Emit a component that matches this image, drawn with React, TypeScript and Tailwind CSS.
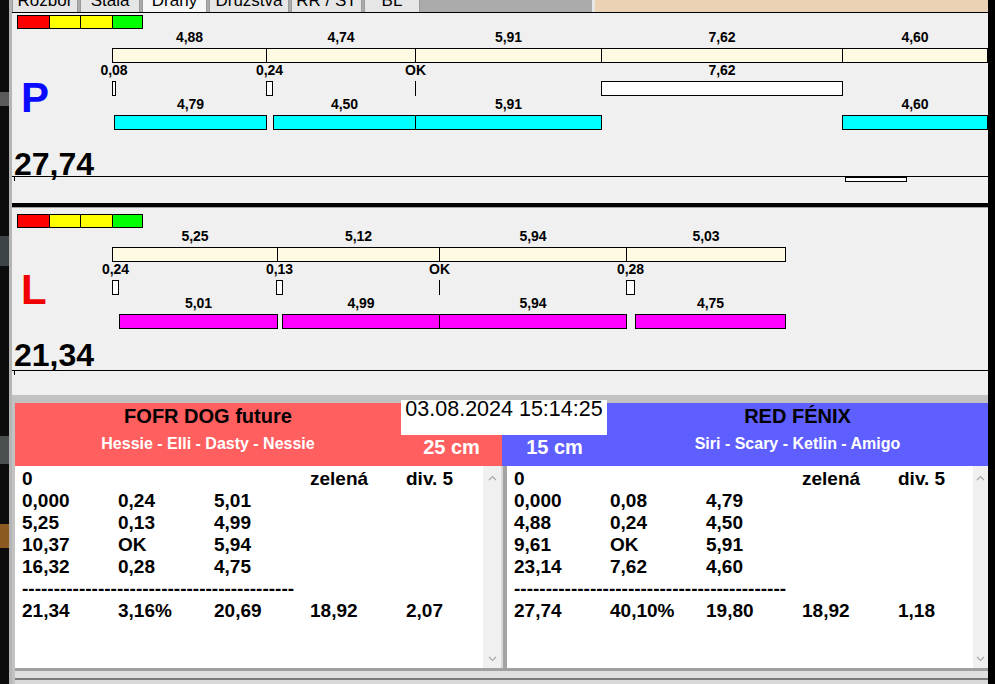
import React from 'react';

// x1, x2 are screen x positions of a segment, label shown centred above it
type Seg = [number, number, string];

interface LaneData {
  letter: string;
  letterCls: string;
  total: string;
  totalCls: string;
  indicatorCls: string;
  lineCls: string;
  heightCls: string;
  shift: number;
  row1: Seg[];
  row2: Seg[];
  row3: Seg[];
  row3Cls: string;
  footBox: boolean;
}

const ORIGIN_X = 12;

const lanes: LaneData[] = [
  {
    letter: 'P',
    letterCls: 'mt-[48px] ml-[9px] text-[#0a0aff]',
    total: '27,74',
    totalCls: 'mt-[33px]',
    indicatorCls: 'mt-[2px]',
    lineCls: '',
    heightCls: 'h-[190px]',
    shift: 0,
    row1: [
      [112, 266, '4,88'],
      [266, 415, '4,74'],
      [415, 601, '5,91'],
      [601, 842, '7,62'],
      [842, 987, '4,60'],
    ],
    row2: [
      [112, 115, '0,08'],
      [266, 272, '0,24'],
      [415, 415, 'OK'],
      [601, 842, '7,62'],
    ],
    row3: [
      [114, 266, '4,79'],
      [273, 415, '4,50'],
      [415, 601, '5,91'],
      [842, 987, '4,60'],
    ],
    row3Cls: 'bg-[#00ffff]',
    footBox: true,
  },
  {
    letter: 'L',
    letterCls: 'mt-[41px] ml-[9px] text-[#f00000]',
    total: '21,34',
    totalCls: 'mt-[32px]',
    indicatorCls: 'mt-[6px]',
    lineCls: 'mt-[3px]',
    heightCls: 'h-[187px]',
    shift: 4,
    row1: [
      [112, 277, '5,25'],
      [277, 439, '5,12'],
      [439, 626, '5,94'],
      [626, 785, '5,03'],
    ],
    row2: [
      [112, 118, '0,24'],
      [276, 282, '0,13'],
      [439, 439, 'OK'],
      [626, 634, '0,28'],
    ],
    row3: [
      [119, 277, '5,01'],
      [282, 439, '4,99'],
      [439, 626, '5,94'],
      [635, 785, '4,75'],
    ],
    row3Cls: 'bg-[#ff00ff]',
    footBox: false,
  },
];

const tabs = [
  { label: 'Rozbor', w: 'w-[66px]', active: false },
  { label: 'Stála', w: 'w-[60px]', active: false },
  { label: 'Dráhy', w: 'w-[65px]', active: true },
  { label: 'Družstva', w: 'w-[80px]', active: false },
  { label: 'RR / ST', w: 'w-[71px]', active: false },
  { label: 'BL', w: 'w-[56px]', active: false },
];

const DASHES = '-'.repeat(43);

const leftRows = [
  ['0', '', '', 'zelená', 'div. 5'],
  ['0,000', '0,24', '5,01', '', ''],
  ['5,25', '0,13', '4,99', '', ''],
  ['10,37', 'OK', '5,94', '', ''],
  ['16,32', '0,28', '4,75', '', ''],
];
const leftTotal = ['21,34', '3,16%', '20,69', '18,92', '2,07'];

const rightRows = [
  ['0', '', '', 'zelená', 'div. 5'],
  ['0,000', '0,08', '4,79', '', ''],
  ['4,88', '0,24', '4,50', '', ''],
  ['9,61', 'OK', '5,91', '', ''],
  ['23,14', '7,62', '4,60', '', ''],
];
const rightTotal = ['27,74', '40,10%', '19,80', '18,92', '1,18'];

function Label({ seg, top }: { seg: Seg; top: number }) {
  const center = (seg[0] + seg[1]) / 2 - ORIGIN_X + 0.5;
  return (
    <span
      className="absolute -ml-[40px] w-[80px] text-center text-[14px] font-bold leading-[14px] text-black"
      style={{ left: center, top }}
    >
      {seg[2]}
    </span>
  );
}

function Bar({ seg, top, color }: { seg: Seg; top: number; color: string }) {
  if (seg[1] === seg[0]) {
    return (
      <div
        className="absolute h-[15px] w-px bg-black"
        style={{ left: seg[0] - ORIGIN_X, top }}
      />
    );
  }
  return (
    <div
      className={`absolute box-border h-[15px] border border-black ${color}`}
      style={{ left: seg[0] - ORIGIN_X, top, width: seg[1] - seg[0] + 1 }}
    />
  );
}

function Indicator({ cls }: { cls: string }) {
  return (
    <div className={`ml-[5px] flex h-[14px] w-[126px] border border-black ${cls}`}>
      <div className="w-[32px] border-r border-black bg-[#ff0000]" />
      <div className="w-[31px] border-r border-black bg-[#ffff00]" />
      <div className="w-[32px] border-r border-black bg-[#ffff00]" />
      <div className="flex-1 bg-[#00ff00]" />
    </div>
  );
}

function Lane({ d }: { d: LaneData }) {
  const s = d.shift;
  return (
    <div className={`relative flex flex-col bg-[#f0f0f0] ${d.heightCls}`}>
      <Indicator cls={d.indicatorCls} />
      <div className={`text-[42px] font-bold leading-[42px] ${d.letterCls}`}>{d.letter}</div>
      <div className={`ml-[2px] text-[32px] font-bold leading-[24px] text-black ${d.totalCls}`}>
        {d.total}
      </div>
      <div className={`flex border-t border-black ${d.lineCls}`}>
        <div className="ml-[2px] h-[4px] w-px bg-black" />
        {d.footBox && (
          <div className="ml-[830px] box-border h-[5px] w-[62px] border border-black bg-white" />
        )}
      </div>

      {/* chart layer */}
      <div className="pointer-events-none absolute inset-0">
        {d.row1.map((seg, i) => (
          <React.Fragment key={`a${i}`}>
            <Label seg={seg} top={17 + s} />
            <Bar seg={seg} top={35 + s} color="bg-[#fffbe3]" />
          </React.Fragment>
        ))}
        {d.row2.map((seg, i) => (
          <React.Fragment key={`b${i}`}>
            <Label seg={seg} top={50 + s} />
            <Bar seg={seg} top={68 + s} color="bg-white" />
          </React.Fragment>
        ))}
        {d.row3.map((seg, i) => (
          <React.Fragment key={`c${i}`}>
            <Label seg={seg} top={84 + s} />
            <Bar seg={seg} top={102 + s} color={d.row3Cls} />
          </React.Fragment>
        ))}
      </div>
    </div>
  );
}

function Chevron({ up }: { up: boolean }) {
  return (
    <svg width="9" height="6" viewBox="0 0 9 6" className="text-[#a8a8a8]">
      <path
        d={up ? 'M1 5 L4.5 1.5 L8 5' : 'M1 1 L4.5 4.5 L8 1'}
        fill="none"
        stroke="currentColor"
        strokeWidth="1.2"
      />
    </svg>
  );
}

function Row({ r }: { r: string[] }) {
  return (
    <div className="grid grid-cols-[96px_96px_96px_96px_1fr]">
      {r.map((c, i) => (
        <span key={i} className="whitespace-nowrap">{c}</span>
      ))}
    </div>
  );
}

function ResultList({ rows, total, widthCls, barCls }: {
  rows: string[][];
  total: string[];
  widthCls: string;
  barCls: string;
}) {
  return (
    <div className={`flex min-w-0 ${widthCls}`}>
      <div className="min-w-0 flex-1 overflow-hidden bg-white pl-[7px] pt-[2px] text-[19px] font-bold leading-[22px] text-black">
        {rows.map((r, i) => (
          <Row key={i} r={r} />
        ))}
        <div className="whitespace-nowrap">{DASHES}</div>
        <Row r={total} />
      </div>
      <div className={`flex shrink-0 flex-col items-center justify-between bg-[#f0f0f0] pt-[9px] pb-[6px] ${barCls}`}>
        <Chevron up />
        <Chevron up={false} />
      </div>
    </div>
  );
}

export default function App() {
  return (
    <div className="flex h-[684px] w-[995px] overflow-hidden bg-black font-['Liberation_Sans',Arial,sans-serif]">
      {/* desktop strip on the left */}
      <div className="flex w-[12px] shrink-0">
        <div className="flex w-[9px] flex-col bg-[#0c0c0c]">
          <div className="mt-[92px] h-[14px] bg-[#5a5a5a]" />
          <div className="mt-[130px] h-[30px] bg-[#3c4448]" />
          <div className="mt-[170px] h-[28px] bg-[#4a5050]" />
          <div className="mt-[60px] h-[24px] bg-[#8a5a20]" />
        </div>
        <div className="w-[3px] bg-[#b4b4b4]" />
      </div>

      <div className="flex w-[976px] min-w-0 shrink-0 flex-col">
        {/* tab strip, cut at the top */}
        <div className="flex h-[12px] overflow-hidden bg-[#ababab]">
          {tabs.map((t) => (
            <div
              key={t.label}
              className={`${t.w} mr-[2px] shrink-0 border-x border-[#9a9a9a] text-center text-[17px] leading-[17px] text-black ${
                t.active ? 'bg-[#f7f7f7]' : 'bg-[#e6e6e6]'
              }`}
            >
              <div className="-mt-[8px]">{t.label}</div>
            </div>
          ))}
          <div className="w-[170px] shrink-0" />
          <div className="w-[3px] shrink-0 bg-[#e6e6e6]" />
          <div className="flex-1 bg-[#ecd2b4]" />
        </div>

        <div className="h-px bg-black" />
        <Lane d={lanes[0]} />
        <div className="h-[4px] bg-black" />
        <div className="h-px bg-[#a0a0a0]" />
        <Lane d={lanes[1]} />

        {/* team area */}
        <div className="relative flex flex-1 flex-col bg-[#c2c2c2] pl-[3px] pt-[8px]">
          <div className="flex h-[63px]">
            <div className="flex w-[487px] bg-[#ff5f5f]">
              <div className="flex w-[386px] flex-col items-center pt-[1px]">
                <div className="text-[20px] font-bold leading-[24px] text-black">FOFR DOG future</div>
                <div className="mt-[6px] text-[16px] font-bold leading-[20px] text-white">
                  Hessie - Elli - Dasty - Nessie
                </div>
              </div>
              <div className="flex flex-1 justify-center pt-[32px] text-[20px] font-bold leading-[24px] text-white">
                25 cm
              </div>
            </div>
            <div className="flex flex-1 bg-[#5f5fff]">
              <div className="flex w-[105px] justify-center pt-[32px] text-[20px] font-bold leading-[24px] text-white">
                15 cm
              </div>
              <div className="flex flex-1 flex-col items-center pt-[1px]">
                <div className="text-[20px] font-bold leading-[24px] text-black">RED FÉNIX</div>
                <div className="mt-[6px] text-[16px] font-bold leading-[20px] text-white">
                  Siri - Scary - Ketlin - Amigo
                </div>
              </div>
            </div>
          </div>

          <div className="flex h-[202px]">
            <ResultList rows={leftRows} total={leftTotal} widthCls="w-[486px] shrink-0" barCls="w-[18px]" />
            <div className="flex w-[6px] shrink-0">
              <div className="w-[2px] bg-[#d8d8d8]" />
              <div className="flex-1 bg-[#a4a4a4]" />
            </div>
            <ResultList rows={rightRows} total={rightTotal} widthCls="flex-1" barCls="w-[15px]" />
          </div>

          <div className="flex flex-col">
            <div className="h-[3px] bg-[#a0a0a0]" />
            <div className="h-[7px] bg-[#e0e0e0]" />
            <div className="h-[2px] bg-[#7a7a7a]" />
            <div className="h-[4px] bg-[#d9d9d9]" />
          </div>

          {/* date/time stamp sits over both headers */}
          <div className="absolute left-[389px] top-[5px] h-[35px] w-[206px] bg-white text-center text-[21.5px] leading-[18px] text-black">
            03.08.2024 15:14:25
          </div>
        </div>
      </div>

      <div className="w-[7px] shrink-0 bg-black" />
    </div>
  );
}
